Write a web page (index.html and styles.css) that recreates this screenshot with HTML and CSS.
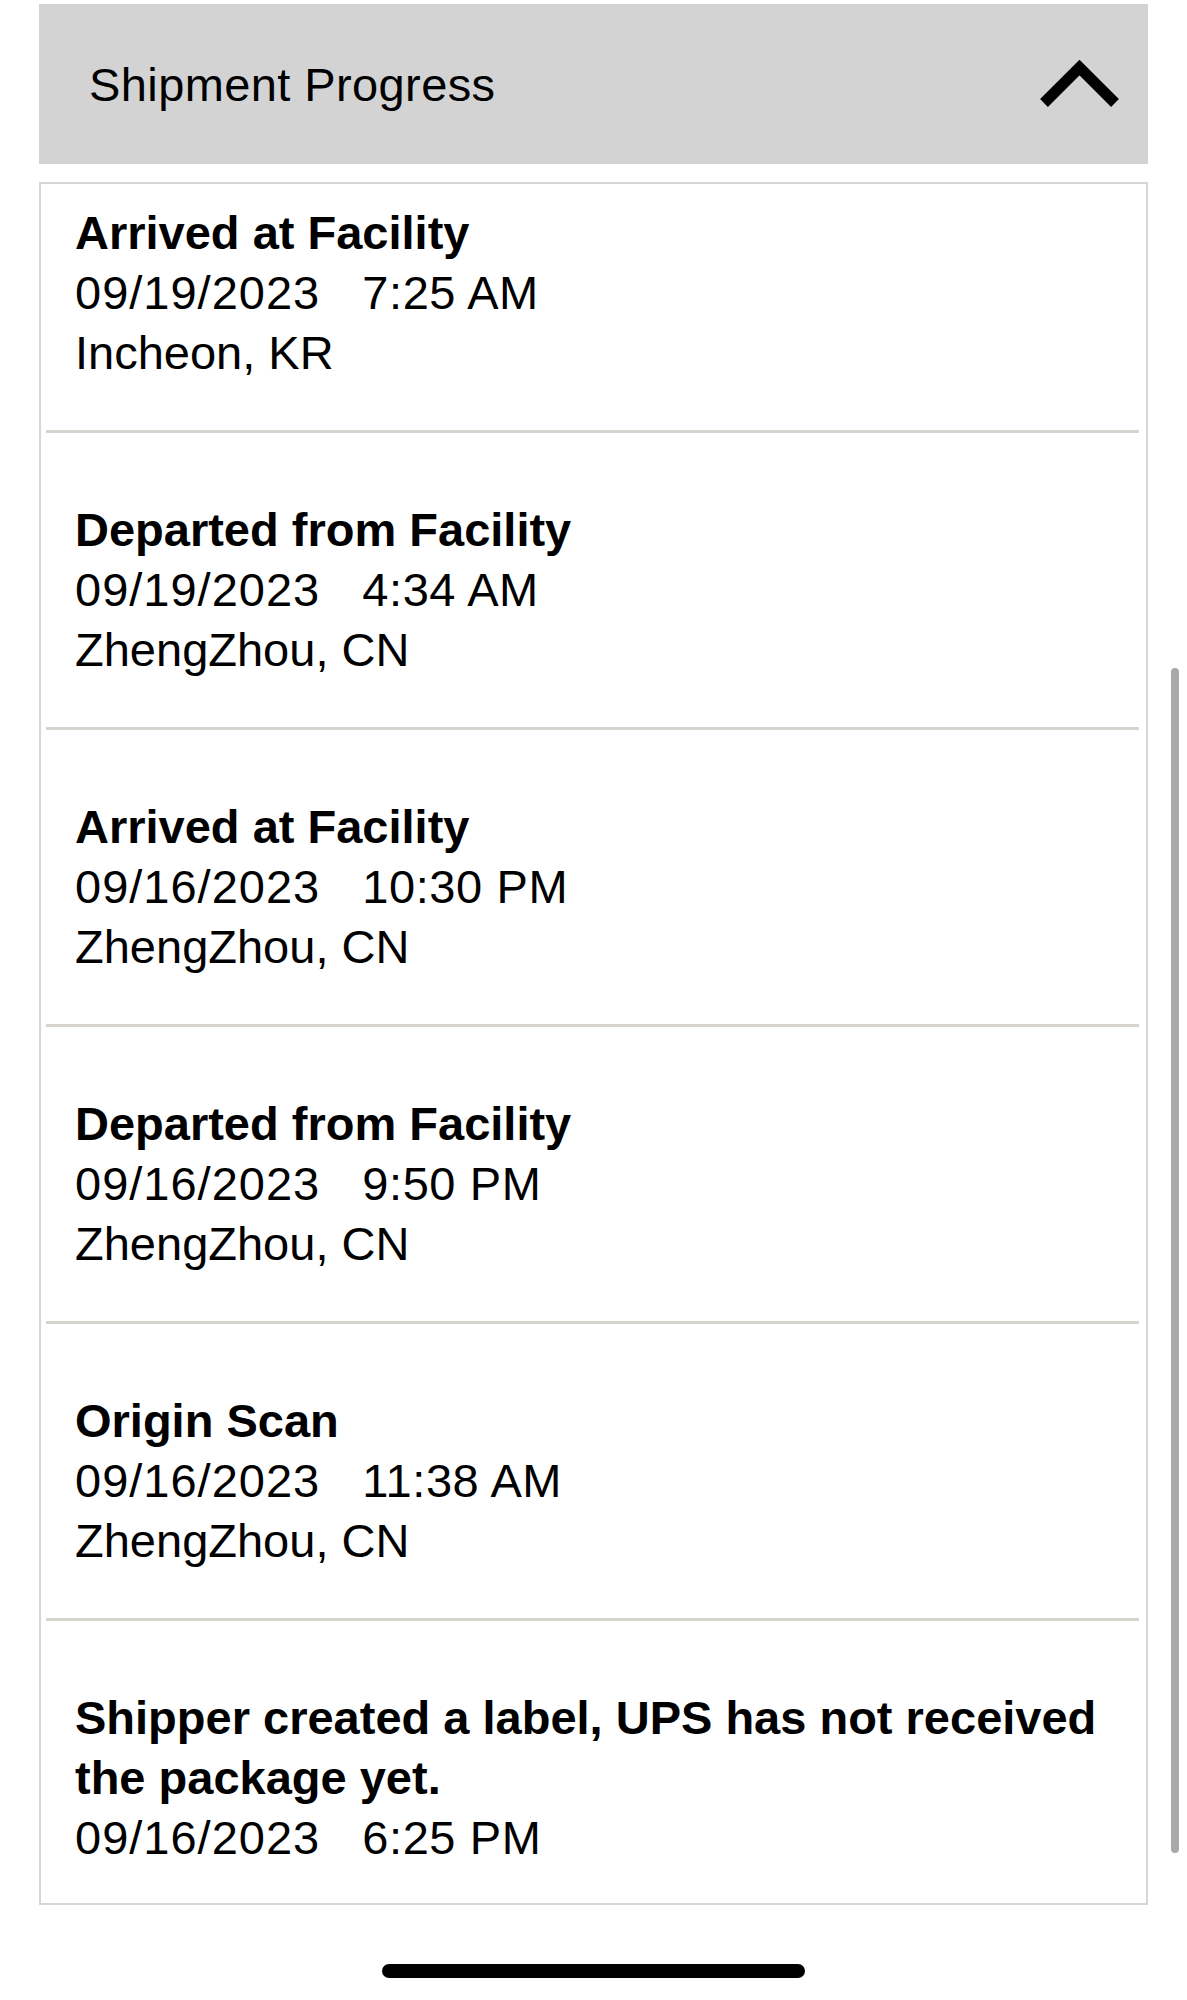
FILE: index.html
```html
<!DOCTYPE html>
<html lang="en">
<head>
<meta charset="utf-8">
<title>Shipment Progress</title>
<link rel="stylesheet" href="styles.css">
</head>
<body>
<div class="screen">
  <header class="section-head">
    <span class="head-title">Shipment Progress</span>
    <svg class="chev" width="80" height="48" viewBox="0 0 80 48" aria-hidden="true">
      <path d="M4 43 L39.5 7.5 L75 43" fill="none" stroke="#000" stroke-width="11" stroke-linejoin="miter" stroke-linecap="butt"/>
    </svg>
  </header>

  <div class="card">
    <ul class="events">
      <li class="event">
        <div class="ev-title">Arrived at Facility</div>
        <div class="ev-line"><span class="date">09/19/2023</span><span class="time">7:25 AM</span></div>
        <div class="ev-line">Incheon, KR</div>
      </li>
      <li class="event">
        <div class="ev-title">Departed from Facility</div>
        <div class="ev-line"><span class="date">09/19/2023</span><span class="time">4:34 AM</span></div>
        <div class="ev-line">ZhengZhou, CN</div>
      </li>
      <li class="event">
        <div class="ev-title">Arrived at Facility</div>
        <div class="ev-line"><span class="date">09/16/2023</span><span class="time">10:30 PM</span></div>
        <div class="ev-line">ZhengZhou, CN</div>
      </li>
      <li class="event">
        <div class="ev-title">Departed from Facility</div>
        <div class="ev-line"><span class="date">09/16/2023</span><span class="time">9:50 PM</span></div>
        <div class="ev-line">ZhengZhou, CN</div>
      </li>
      <li class="event">
        <div class="ev-title">Origin Scan</div>
        <div class="ev-line"><span class="date">09/16/2023</span><span class="time">11:38 AM</span></div>
        <div class="ev-line">ZhengZhou, CN</div>
      </li>
      <li class="event">
        <div class="ev-title">Shipper created a label, UPS has not received the package yet.</div>
        <div class="ev-line"><span class="date">09/16/2023</span><span class="time">6:25 PM</span></div>
      </li>
    </ul>
  </div>

  <div class="scroll-thumb"></div>
  <div class="home-bar"></div>
</div>
</body>
</html>
```

FILE: styles.css
```css
* {
  box-sizing: border-box;
}

html, body {
  margin: 0;
  padding: 0;
  background: #ffffff;
}

body {
  font-family: "Liberation Sans", Arial, sans-serif;
  color: #000000;
}

.screen {
  position: relative;
  width: 1187px;
  height: 2000px;
  padding: 4px 39px 0 39px;
  overflow: hidden;
}

.section-head {
  display: flex;
  align-items: center;
  justify-content: space-between;
  height: 160px;
  padding: 0 28px 0 50px;
  background: #d3d3d3;
}

.head-title {
  font-size: 47px;
  font-weight: 400;
  letter-spacing: 0.4px;
  color: #000;
}

.chev {
  display: block;
  flex: none;
}

.card {
  margin-top: 18px;
  border: 2px solid #d6d6d6;
  background: #ffffff;
}

.events {
  list-style: none;
  margin: 0;
  padding: 0;
}

.event {
  margin: 0 7px 0 5px;
  padding: 67px 0 47px 29px;
  border-bottom: 3px solid #d7d3cf;
  font-size: 47px;
  line-height: 60px;
}

.event:first-child {
  padding-top: 19px;
}

.event:last-child {
  padding-bottom: 35px;
  border-bottom: none;
}

.ev-title {
  font-weight: 700;
}

.ev-line {
  font-weight: 400;
  white-space: nowrap;
}

.date {
  letter-spacing: 1px;
}

.time {
  margin-left: 42px;
  letter-spacing: 0.6px;
}

.scroll-thumb {
  position: absolute;
  left: 1171px;
  top: 668px;
  width: 8px;
  height: 1185px;
  border-radius: 4px;
  background: #a9a9a9;
}

.home-bar {
  width: 423px;
  height: 14px;
  margin: 59px auto 0;
  border-radius: 7px;
  background: #000000;
}
```
